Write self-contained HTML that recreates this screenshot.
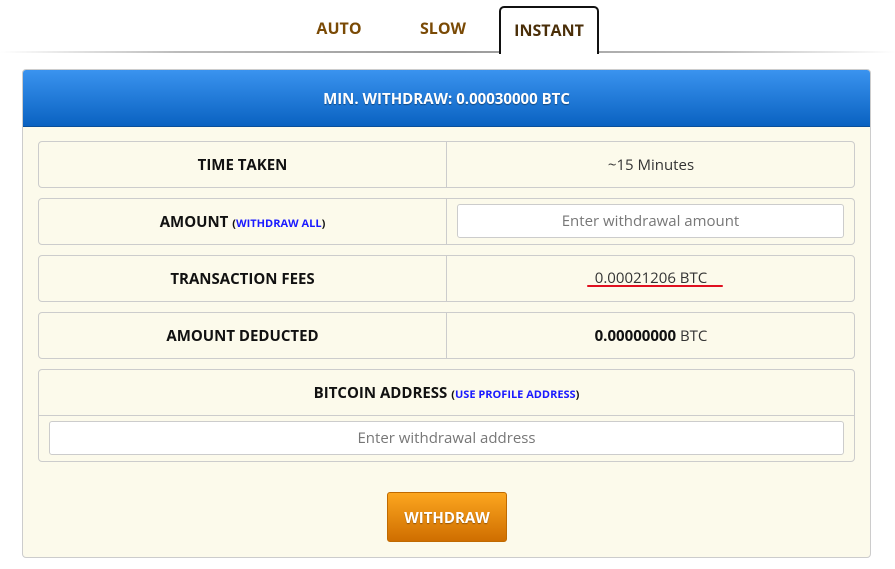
<!DOCTYPE html>
<html><head><style>
*{box-sizing:border-box;margin:0;padding:0}
body{width:895px;height:569px;background:#fff;font-family:"Open Sans","Liberation Sans",sans-serif;position:relative;overflow:hidden}
.a{position:absolute}
.tab{position:absolute;font-weight:bold;font-size:16px;color:#7a4a05;text-align:center}
.line{left:0;width:895px;top:51px;height:2px;background:linear-gradient(90deg,#fff 0%,#bbb 20%,#999 50%,#bbb 80%,#fff 100%)}
.inst{left:499px;top:6px;width:100px;height:48px;border:2px solid #111;border-bottom:none;border-radius:5px 5px 0 0;background:#fff}
.panel{left:22px;top:69px;width:849px;height:489px;background:#fcfaeb;border:1px solid #ccc;border-radius:4px;overflow:hidden}
.hdr{left:0;top:0;width:100%;height:57px;background:linear-gradient(#3a93ef,#0a62c1);color:#fff;font-weight:bold;font-size:15px;text-align:center;line-height:58px;text-shadow:0 1px 1px rgba(0,0,0,.4);border-bottom:1px solid #0a4f9a}
.row{position:absolute;left:38px;width:817px;height:47px;border:1px solid #ccc;border-radius:4px;background:#fcfaeb}
.l{position:absolute;left:0;top:0;width:408px;height:100%;border-right:1px solid #ccc;text-align:center;font-weight:bold;font-size:15px;color:#111;line-height:46px}
.r{position:absolute;left:408px;top:0;width:408px;height:100%;text-align:center;font-size:15px;color:#333;line-height:46px}
.lk{color:#1a1aff;font-size:11px}
.lp{font-size:11px}
.inp{position:absolute;background:#fff;border:1px solid #ccc;border-radius:3px;color:#777;font-size:15px;text-align:center;line-height:32px}
</style></head><body>
<div class="a line"></div>
<div class="a inst"></div>
<div class="tab" style="left:300px;top:17px;width:78px">AUTO</div>
<div class="tab" style="left:404px;top:17px;width:78px">SLOW</div>
<div class="tab" style="left:499px;top:19px;width:100px;color:#4a2e08">INSTANT</div>
<div class="a panel"><div class="a hdr">MIN. WITHDRAW: 0.00030000 BTC</div></div>
<div class="row" style="top:141px"><div class="l">TIME TAKEN</div><div class="r">~15 Minutes</div></div>
<div class="row" style="top:198px"><div class="l">AMOUNT <span class="lp">(<span class="lk">WITHDRAW ALL</span>)</span></div><div class="r"><div class="inp" style="left:10px;top:5px;width:387px;height:34px">Enter withdrawal amount</div></div></div>
<div class="row" style="top:255px"><div class="l">TRANSACTION FEES</div><div class="r" style="line-height:44px">0.00021206 BTC</div></div>
<div class="a" style="left:587px;top:285px;width:136px;height:2px;background:#e01020;border-radius:1px"></div>
<div class="row" style="top:312px"><div class="l">AMOUNT DEDUCTED</div><div class="r"><b style="color:#111">0.00000000</b> BTC</div></div>
<div class="row" style="top:369px;height:93px">
<div style="position:absolute;left:0;top:0;width:100%;height:46px;border-bottom:1px solid #ccc;text-align:center;font-weight:bold;font-size:15px;line-height:46px;color:#111">BITCOIN ADDRESS <span class="lp">(<span class="lk">USE PROFILE ADDRESS</span>)</span></div>
<div class="inp" style="left:10px;top:51px;width:795px;height:34px">Enter withdrawal address</div>
</div>
<div class="a" style="left:387px;top:492px;width:120px;height:50px;background:linear-gradient(#fca61f,#cf6e00);border:1px solid #c06a00;border-radius:3px;color:#fff;font-weight:bold;font-size:15px;text-align:center;line-height:50px;text-shadow:0 1px 1px rgba(0,0,0,.35)">WITHDRAW</div>
</body></html>
